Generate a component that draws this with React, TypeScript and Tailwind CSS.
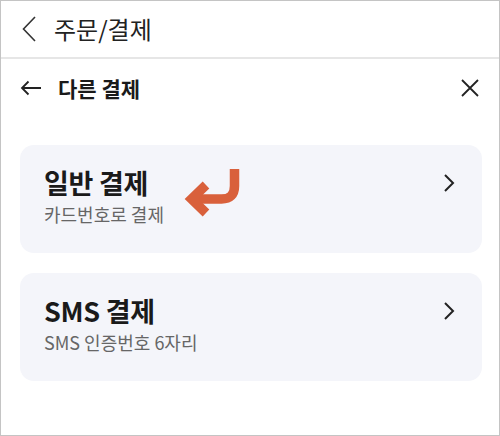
import React from 'react';

// 결제 수단 카드
function PayCard({ title, sub, children }: { title: string; sub: string; children?: React.ReactNode }) {
  return (
    <div className="relative h-[108px] rounded-[14px] bg-[#f4f5fa] pl-[24px] pr-[27px] pt-[23px]">
      <div className="flex items-center justify-between h-[30px]">
        <span className="text-[27px] leading-[30px] font-bold text-[#1a1a1a] tracking-[-0.3px]">{title}</span>
        <svg width="12" height="20" viewBox="0 0 12 20" fill="none">
          <path d="M2 2 L10 10 L2 18" stroke="#222" strokeWidth="2" />
        </svg>
      </div>
      <div className="mt-[4px] text-[18px] leading-[24px] text-[#666]">{sub}</div>
      {children}
    </div>
  );
}

export default function App() {
  return (
    <div
      className="w-[500px] h-[436px] border border-[#c4c4c4] bg-white"
      style={{ fontFamily: '"Noto Sans CJK KR", "Noto Sans", sans-serif' }}
    >
      {/* 상단 헤더 */}
      <div className="h-[58px] flex items-center pl-[21px] gap-[18px] border-b-2 border-[#e6e6e6]">
        <svg width="14" height="26" viewBox="0 0 14 26" fill="none">
          <path d="M13 1 L1.5 13 L13 25" stroke="#333" strokeWidth="1.6" />
        </svg>
        <span className="text-[24px] text-[#222] leading-none">주문/결제</span>
      </div>

      {/* 다른 결제 */}
      <div className="h-[58px] flex items-center pl-[19px] pr-[19px] justify-between">
        <div className="flex items-center gap-[16px]">
          <svg width="22" height="16" viewBox="0 0 22 16" fill="none">
            <path d="M21 8 H2 M8.5 1.5 L2 8 L8.5 14.5" stroke="#222" strokeWidth="1.8" />
          </svg>
          <span className="text-[21px] font-bold text-[#1a1a1a] leading-none">다른 결제</span>
        </div>
        <svg width="20" height="20" viewBox="0 0 20 20" fill="none">
          <path d="M2 2 L18 18 M18 2 L2 18" stroke="#222" strokeWidth="1.8" />
        </svg>
      </div>

      <div className="ml-[19px] w-[462px] mt-[28px] flex flex-col gap-[20px]">
        <PayCard title="일반 결제" sub="카드번호로 결제">
          <svg className="absolute left-[162px] top-[22px]" width="60" height="52" viewBox="0 0 60 52" fill="none">
            <path d="M52.5 2 V19 Q52.5 32 39.5 32 H12" stroke="#d9603b" strokeWidth="9.5" />
            <path d="M24 18 L9.5 32 L24 46" stroke="#d9603b" strokeWidth="9.5" strokeLinejoin="miter" />
          </svg>
        </PayCard>
        <PayCard title="SMS 결제" sub="SMS 인증번호 6자리" />
      </div>
    </div>
  );
}
